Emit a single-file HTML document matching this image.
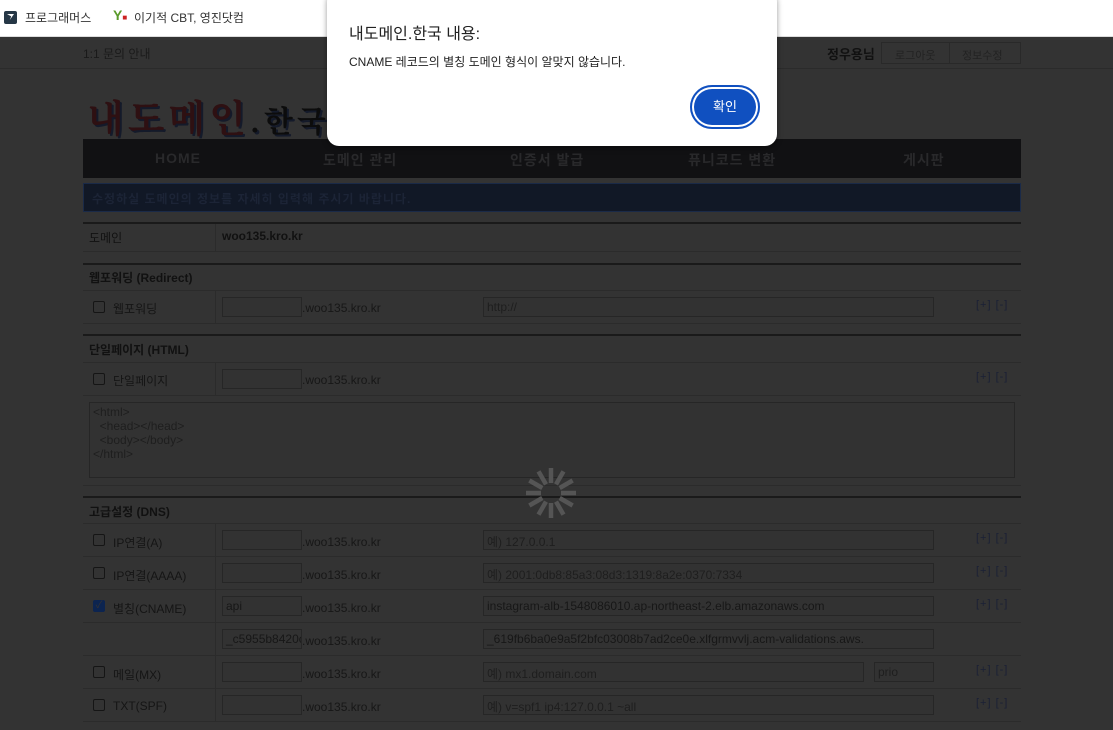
<!DOCTYPE html>
<html><head><meta charset="utf-8"><style>
*{box-sizing:border-box;margin:0;padding:0}
body{width:1113px;height:730px;overflow:hidden;background:#333;font-family:"Liberation Sans","Noto Sans CJK KR",sans-serif;font-size:12px;color:#151515;position:relative}
.bm{position:absolute;left:0;top:0;width:1113px;height:37px;background:#fff;border-bottom:1px solid #ddd;font-size:12px;color:#333}
.abs{position:absolute}
.top{position:absolute;left:0;top:37px;width:1113px;height:32px;border-bottom:1px solid #2b2b2b}
.nav{position:absolute;left:83px;top:139px;width:938px;height:39px;background:#111113;color:#29292b;font-weight:bold;font-size:14px}
.nav span{position:absolute;top:11px;letter-spacing:1px}
.notice{position:absolute;left:83px;top:183px;width:938px;height:29px;background:#111826;border:1px solid #1a2a48;color:#1c2436;font-weight:bold;font-size:12px;padding:6px 0 0 8px;letter-spacing:1px}
.hl{position:absolute;left:83px;width:938px;height:2px;background:#1a1a1a}
.sl{position:absolute;left:83px;width:938px;height:1px;background:#2b2b2b}
.vl{position:absolute;left:215px;width:1px;background:#2b2b2b}
.h{position:absolute;left:89px;font-weight:bold;font-size:12px;color:#111}
.lab{position:absolute;left:113px;font-size:12px;color:#151515}
.cb{position:absolute;left:93px;width:12px;height:12px;border:1px solid #151515;border-radius:2px}
.in{position:absolute;height:20px;border:1px solid #262626;background:#323232;font-size:12px;color:#171717;padding:2px 3px;white-space:nowrap;overflow:hidden}
.dom{position:absolute;left:302px;font-size:12px;color:#171717}
.pm{position:absolute;left:976px;font-size:11px;color:#1a2035;letter-spacing:1px}
.dlg{position:absolute;left:327px;top:-10px;width:450px;height:156px;background:#fff;border-radius:12px;box-shadow:0 2px 6px rgba(0,0,0,.4)}
</style></head><body>
<div class="bm">
<div class="abs" style="left:4px;top:11px;width:13px;height:13px;background:#263746;border-radius:2px"><div style="position:absolute;left:3px;top:3px;width:7px;height:6px;background:#fff;clip-path:polygon(0 0,100% 0,40% 100%,60% 40%)"></div></div>
<span class="abs" style="left:25px;top:9px">프로그래머스</span>
<span class="abs" style="left:113px;top:7px;color:#5a9a2a;font-weight:bold;font-size:14px">Y<span style="color:#c22;font-size:8px">■</span></span>
<span class="abs" style="left:134px;top:9px">이기적 CBT, 영진닷컴</span>
</div>
<div class="top"><span class="abs" style="left:83px;top:8px;font-size:12px;color:#1a1a1a">1:1 문의 안내</span>
<span class="abs" style="left:827px;top:7px;font-weight:bold;font-size:13px;color:#111">정우용님</span>
<div class="abs" style="left:881px;top:5px;width:140px;height:22px;border:1px solid #292929;font-size:11px;color:#222"><span class="abs" style="left:13px;top:4px">로그아웃</span><div class="abs" style="left:67px;top:0;width:1px;height:20px;background:#292929"></div><span class="abs" style="left:80px;top:4px">정보수정</span></div>
</div>
<div class="abs" style="left:87px;top:88px;font-size:38px;font-weight:bold;color:#2e1012;letter-spacing:4px;font-family:'Noto Serif CJK SC',serif;text-shadow:2px 2px 0 #141a2a">내도메인<span style="color:#0c0c0c;font-size:30px">.한국</span></div>
<div class="nav"><span style="left:72px">HOME</span><span style="left:240px">도메인 관리</span><span style="left:427px">인증서 발급</span><span style="left:605px">퓨니코드 변환</span><span style="left:820px">게시판</span></div>
<div class="notice">수정하실 도메인의 정보를 자세히 입력해 주시기 바랍니다.</div>
<div class="hl" style="top:222px"></div>
<span class="h" style="left:89px;top:229px;font-weight:normal">도메인</span>
<span class="h" style="left:222px;top:229px">woo135.kro.kr</span>
<div class="vl" style="top:224px;height:27px"></div>
<div class="sl" style="top:251px"></div>
<div class="hl" style="top:263px"></div>
<span class="h" style="top:269px">웹포워딩 (Redirect)</span>
<div class="sl" style="top:290px"></div>
<div class="vl" style="top:290px;height:33px"></div>
<div class="cb" style="top:301px"></div><span class="lab" style="top:300px">웹포워딩</span>
<div class="in" style="left:222px;top:297px;width:80px"></div><span class="dom" style="top:301px">.woo135.kro.kr</span>
<div class="in" style="left:483px;top:297px;width:451px;color:#1e1e1e">http://</div><span class="pm" style="top:299px">[+] [-]</span>
<div class="sl" style="top:323px"></div>
<div class="hl" style="top:334px"></div>
<span class="h" style="top:341px">단일페이지 (HTML)</span>
<div class="sl" style="top:362px"></div>
<div class="vl" style="top:362px;height:33px"></div>
<div class="cb" style="top:373px"></div><span class="lab" style="top:372px">단일페이지</span>
<div class="in" style="left:222px;top:369px;width:80px"></div><span class="dom" style="top:373px">.woo135.kro.kr</span>
<span class="pm" style="top:371px">[+] [-]</span>
<div class="sl" style="top:395px"></div>
<div class="in" style="left:89px;top:402px;width:926px;height:76px;white-space:pre;line-height:14px;color:#1e1e1e">&lt;html&gt;
  &lt;head&gt;&lt;/head&gt;
  &lt;body&gt;&lt;/body&gt;
&lt;/html&gt;</div>
<div class="sl" style="top:485px"></div>
<div class="hl" style="top:496px"></div>
<span class="h" style="top:503px">고급설정 (DNS)</span>
<div class="sl" style="top:523px"></div>
<div class="vl" style="top:523px;height:198px"></div>

<div class="cb" style="top:534px"></div><span class="lab" style="top:534px">IP연결(A)</span>
<div class="in" style="left:222px;top:530px;width:80px"></div><span class="dom" style="top:535px">.woo135.kro.kr</span>
<div class="in" style="left:483px;top:530px;width:451px;color:#1e1e1e">예) 127.0.0.1</div><span class="pm" style="top:532px">[+] [-]</span>
<div class="sl" style="top:556px"></div>

<div class="cb" style="top:567px"></div><span class="lab" style="top:567px">IP연결(AAAA)</span>
<div class="in" style="left:222px;top:563px;width:80px"></div><span class="dom" style="top:568px">.woo135.kro.kr</span>
<div class="in" style="left:483px;top:563px;width:451px;color:#1e1e1e">예) 2001:0db8:85a3:08d3:1319:8a2e:0370:7334</div><span class="pm" style="top:565px">[+] [-]</span>
<div class="sl" style="top:589px"></div>

<div class="cb" style="top:600px;background:#0c2450;border-color:#0c2450;color:#333;font-size:10px;line-height:10px;text-align:center">✓</div><span class="lab" style="top:600px">별칭(CNAME)</span>
<div class="in" style="left:222px;top:596px;width:80px">api</div><span class="dom" style="top:601px">.woo135.kro.kr</span>
<div class="in" style="left:483px;top:596px;width:451px">instagram-alb-1548086010.ap-northeast-2.elb.amazonaws.com</div><span class="pm" style="top:598px">[+] [-]</span>
<div class="sl" style="top:622px"></div>

<div class="in" style="left:222px;top:629px;width:80px">_c5955b8420c</div><span class="dom" style="top:634px">.woo135.kro.kr</span>
<div class="in" style="left:483px;top:629px;width:451px">_619fb6ba0e9a5f2bfc03008b7ad2ce0e.xlfgrmvvlj.acm-validations.aws.</div>
<div class="sl" style="top:655px"></div>

<div class="cb" style="top:666px"></div><span class="lab" style="top:666px">메일(MX)</span>
<div class="in" style="left:222px;top:662px;width:80px"></div><span class="dom" style="top:667px">.woo135.kro.kr</span>
<div class="in" style="left:483px;top:662px;width:381px;color:#1e1e1e">예) mx1.domain.com</div>
<div class="in" style="left:874px;top:662px;width:60px;color:#1e1e1e">prio</div><span class="pm" style="top:664px">[+] [-]</span>
<div class="sl" style="top:688px"></div>

<div class="cb" style="top:699px"></div><span class="lab" style="top:699px">TXT(SPF)</span>
<div class="in" style="left:222px;top:695px;width:80px"></div><span class="dom" style="top:700px">.woo135.kro.kr</span>
<div class="in" style="left:483px;top:695px;width:451px;color:#1e1e1e">예) v=spf1 ip4:127.0.0.1 ~all</div><span class="pm" style="top:697px">[+] [-]</span>
<div class="sl" style="top:721px"></div>

<svg class="abs" style="left:518px;top:460px" width="66" height="66" viewBox="-33 -33 66 66">
<g stroke="#555" stroke-width="4.5" stroke-linecap="butt">
<line x1="0" y1="-10" x2="0" y2="-25" transform="rotate(0)"/>
<line x1="0" y1="-10" x2="0" y2="-25" transform="rotate(30)"/>
<line x1="0" y1="-10" x2="0" y2="-25" transform="rotate(60)"/>
<line x1="0" y1="-10" x2="0" y2="-25" transform="rotate(90)"/>
<line x1="0" y1="-10" x2="0" y2="-25" transform="rotate(120)"/>
<line x1="0" y1="-10" x2="0" y2="-25" transform="rotate(150)"/>
<line x1="0" y1="-10" x2="0" y2="-25" transform="rotate(180)"/>
<line x1="0" y1="-10" x2="0" y2="-25" transform="rotate(210)"/>
<line x1="0" y1="-10" x2="0" y2="-25" transform="rotate(240)"/>
<line x1="0" y1="-10" x2="0" y2="-25" transform="rotate(270)"/>
<line x1="0" y1="-10" x2="0" y2="-25" transform="rotate(300)"/>
<line x1="0" y1="-10" x2="0" y2="-25" transform="rotate(330)"/>
</g></svg>

<div class="dlg">
<span class="abs" style="left:22px;top:30px;font-size:16px;color:#222">내도메인.한국 내용:</span>
<span class="abs" style="left:22px;top:63px;font-size:12px;color:#222">CNAME 레코드의 별칭 도메인 형식이 알맞지 않습니다.</span>
<div class="abs" style="left:363px;top:95px;width:70px;height:44px;border-radius:22px;background:#1050c0;box-shadow:inset 0 0 0 2px #1050c0,inset 0 0 0 4px #fff;color:#fff;font-size:13px;text-align:center;line-height:44px">확인</div>
</div>
</body></html>
